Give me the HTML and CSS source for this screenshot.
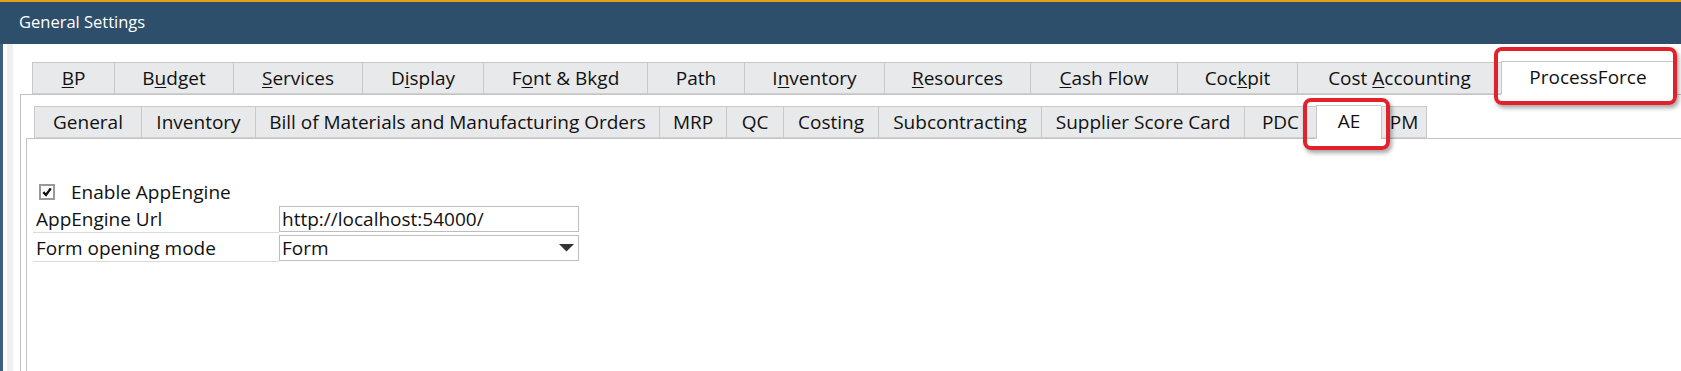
FILE: index.html
```html
<!DOCTYPE html>
<html lang="en">
<head>
    <meta charset="UTF-8">
    <meta name="viewport" content="width=device-width, initial-scale=1.0">
    <title>General Settings</title>
    <link rel="stylesheet" href="styles.css">
</head>
<body>

    <div class="window">
        <div class="titlebar">General Settings</div>

        <div class="frame">
            <div class="strip"></div>

            <div class="tabctl">
                <div class="tabs tabs-main">
                    <div class="tab"><u>B</u>P</div>
                    <div class="tab">B<u>u</u>dget</div>
                    <div class="tab"><u>S</u>ervices</div>
                    <div class="tab">D<u>i</u>splay</div>
                    <div class="tab">F<u>o</u>nt &amp; Bkgd</div>
                    <div class="tab">Path</div>
                    <div class="tab">I<u>n</u>ventory</div>
                    <div class="tab"><u>R</u>esources</div>
                    <div class="tab"><u>C</u>ash Flow</div>
                    <div class="tab">Coc<u>k</u>pit</div>
                    <div class="tab">Cost <u>A</u>ccounting</div>
                    <div class="tab active">ProcessForce</div>
                </div>

                <div class="panel panel-outer">
                    <div class="tabs tabs-sub">
                        <div class="tab">General</div>
                        <div class="tab">Inventory</div>
                        <div class="tab">Bill of Materials and Manufacturing Orders</div>
                        <div class="tab">MRP</div>
                        <div class="tab">QC</div>
                        <div class="tab">Costing</div>
                        <div class="tab">Subcontracting</div>
                        <div class="tab">Supplier Score Card</div>
                        <div class="tab">PDC</div>
                        <div class="tab active">AE</div>
                        <div class="tab">PM</div>
                    </div>

                    <div class="panel panel-inner">
                        <label class="check-row">
                            <span class="checkbox">
                                <svg width="12" height="12" viewBox="0 0 12 12"><path d="M2.3 6.2 L5 9 L9.8 2.4" fill="none" stroke="#111" stroke-width="2.4"/></svg>
                            </span>
                            Enable AppEngine
                        </label>

                        <div class="field-row">
                            <div class="field-label">AppEngine Url</div>
                            <div class="field-input">http://localhost:54000/</div>
                        </div>

                        <div class="field-row">
                            <div class="field-label">Form opening mode</div>
                            <div class="field-input field-select">
                                Form
                                <svg class="arrow" width="15" height="8" viewBox="0 0 15 8"><polygon points="0,0 15,0 7.5,7.5" fill="#333"/></svg>
                            </div>
                        </div>
                    </div>
                </div>
            </div>
        </div>

        <!-- annotation boxes -->
        <div class="mark mark-pf"></div>
        <div class="mark mark-ae"></div>
    </div>

</body>
</html>
```

FILE: styles.css
```css
/* General styling */
body {
    margin: 0;
    padding: 0;
    font-family: "Open Sans", "Noto Sans", sans-serif;
    font-size: 19px;
    color: #111;
    background-color: #fff;
}

.window {
    position: relative;
    height: 100vh;
    display: flex;
    flex-direction: column;
    overflow: hidden;
}

.titlebar {
    height: 42px;
    border-top: 2px solid #e3a21a;
    background-color: #2d4f6c;
    color: #fff;
    font-size: 16.5px;
    line-height: 40px;
    padding-left: 19px;
}

.frame {
    flex: 1;
    display: flex;
    border-left: 3px solid #3e5f7d;
    padding-left: 4px;
}

.strip {
    width: 6px;
    background-color: #f0f0f0;
}

.tabctl {
    flex: 1;
    margin-left: 7px;
    padding-top: 18px;
    display: flex;
    flex-direction: column;
}

/* Tabs */
.tabs {
    display: grid;
    height: 32px;
}

.tabs-main {
    margin-left: 12px;
    grid-template-columns: 82px 119px 129px 121px 164px 97px 140px 146px 147px 120px 204px 174px;
}

.tabs-sub {
    margin-left: 8px;
    grid-template-columns: 107px 114px 404px 67px 57px 95px 163px 203px 72px 65px 46px;
}

.tab {
    box-sizing: border-box;
    background-color: #e8e9eb;
    border-top: 1px solid #c9c9c9;
    border-left: 1px solid #c9c9c9;
    border-bottom: 1px solid #d0d0d0;
    text-align: center;
    line-height: 30px;
    white-space: nowrap;
    overflow: hidden;
}

.tab:last-child {
    border-right: 1px solid #c9c9c9;
}

.tab u {
    text-underline-offset: 2px;
}

.tab.active {
    position: relative;
    z-index: 1;
    background-color: #fff;
    border-bottom-color: #fff;
    margin-top: -1px;
    margin-bottom: -1px;
    height: 34px;
}

/* Panels */
.panel {
    flex: 1;
    display: flex;
    flex-direction: column;
    background-color: #fff;
    border-left: 1px solid #c3c3c3;
    border-top: 1px solid #c3c3c3;
}

.panel-outer {
    padding-left: 5px;
    padding-top: 11px;
}

.panel-inner {
    padding: 41px 0 0 6px;
}

/* Form content */
.check-row {
    display: flex;
    align-items: center;
    height: 24px;
    margin-left: 6px;
}

.checkbox {
    box-sizing: border-box;
    width: 16px;
    height: 16px;
    border: 2px solid #999;
    margin-right: 16px;
    display: flex;
    align-items: center;
    justify-content: center;
}

.field-row {
    display: grid;
    grid-template-columns: 246px 300px;
    grid-template-rows: 29px;
}

.field-label {
    height: 28px;
    border-bottom: 1px solid #dadada;
    padding-left: 3px;
    line-height: 30px;
}

.field-input {
    box-sizing: border-box;
    align-self: end;
    height: 26px;
    margin-bottom: 1px;
    border: 1px solid #bdbdbd;
    padding-left: 2px;
    line-height: 24px;
}

.field-select {
    display: flex;
    align-items: center;
    justify-content: space-between;
    padding-right: 4px;
}

/* Red highlight marks */
.mark {
    position: absolute;
    border: 4px solid #e1212b;
    border-radius: 8px;
    box-shadow: 2px 3px 4px rgba(0, 0, 0, 0.35);
    z-index: 5;
}

.mark-pf {
    left: 1494px;
    top: 47px;
    width: 175px;
    height: 50px;
}

.mark-ae {
    left: 1303px;
    top: 98px;
    width: 79px;
    height: 44px;
}
```
